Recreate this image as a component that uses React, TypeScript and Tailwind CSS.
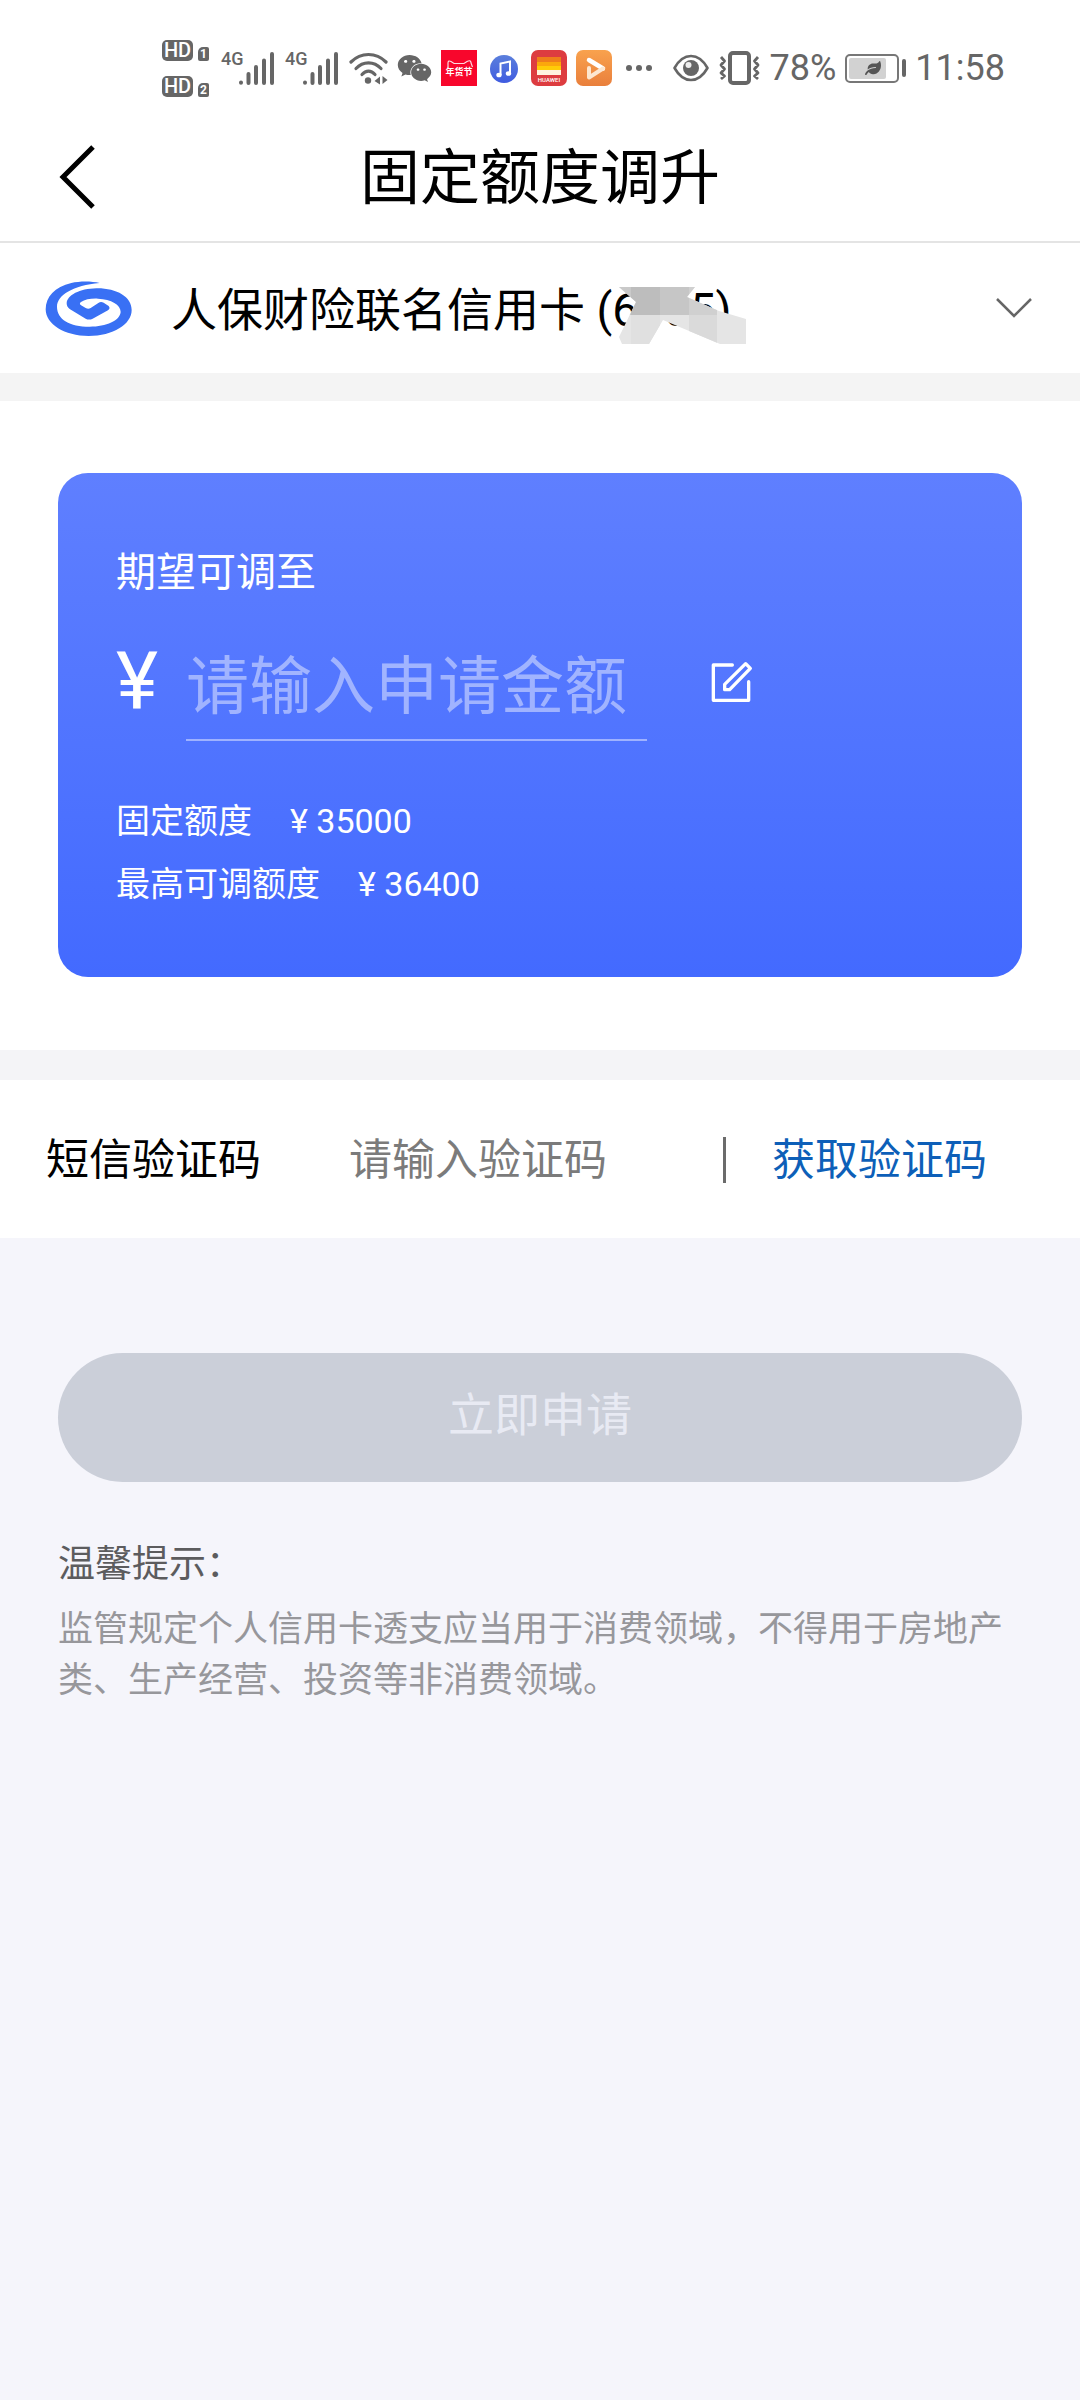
import React, { useState } from 'react';
import { FaLeaf, FaWeixin } from 'react-icons/fa';

const HdBadge = ({ sim }: { sim: number }) => (
  <div className="flex items-end gap-[5px]">
    <span className="flex h-[21px] w-[31px] items-center justify-center rounded-[5px] bg-[#666] text-[20px] leading-none font-medium text-white">
      HD
    </span>
    <span className="flex h-[14px] w-[11px] items-center justify-center rounded-[2px] rounded-tl-[5px] bg-[#666] text-[12px] leading-none font-bold text-white">
      {sim}
    </span>
  </div>
);

const Signal = () => (
  <div className="relative h-[34px] w-[53px]">
    <span className="absolute top-0 left-0 text-[18px] leading-[16px] font-medium text-[#666]">4G</span>
    <svg viewBox="0 0 53 34" className="h-full w-full" stroke="#666" strokeWidth="4" strokeLinecap="round">
      <path d="M20 31.5v.3M27.500 23v9M35 16v16M43 9.500v22.500M51 3v29" />
    </svg>
  </div>
);

const WifiIcon = () => (
  <svg viewBox="0 0 39 33" className="h-[33px] w-[39px]" fill="none" stroke="#666" strokeWidth="3.200" strokeLinecap="round">
    <path d="M2 10C12 0 27 0 37 10" />
    <path d="M7 16.500C14 9 25 9 32 16.500" />
    <path d="M13 22.500C17 18 22 18 26 22.500" />
    <circle cx="19" cy="28.500" r="3.200" fill="#666" stroke="none" />
    <path d="M31 24.500v8l-5.500-3.500zM33.500 24v8l5-4z" fill="#666" stroke="none" />
  </svg>
);

const TmallIcon = () => (
  <svg viewBox="0 0 36 36" className="h-9 w-9">
    <rect width="36" height="36" fill="#f8062c" />
    <path d="M7 17v-4q0-3 3-1.500l3 2h10l3-2q4-2 4 1.500l1.500 4" fill="none" stroke="#fff" strokeOpacity=".85" strokeWidth="1.200" />
    <text x="18" y="25" textAnchor="middle" fontSize="9" fontWeight="700" fill="#fff">年货节</text>
  </svg>
);

const MusicIcon = () => (
  <svg viewBox="0 0 36 36" className="h-9 w-9">
    <defs>
      <linearGradient id="music" x1="0" y1="0" x2="0" y2="1">
        <stop offset="0" stopColor="#5b7fdc" />
        <stop offset="1" stopColor="#3f5be0" />
      </linearGradient>
    </defs>
    <circle cx="18" cy="19" r="14" fill="url(#music)" />
    <path d="M14.500 25V13.500l9.500-2V23" fill="none" stroke="#fff" strokeWidth="2" />
    <ellipse cx="13" cy="25" rx="2.700" ry="2.300" fill="#fff" />
    <ellipse cx="22.500" cy="23.500" rx="2.700" ry="2.300" fill="#fff" />
  </svg>
);

const HuaweiIcon = () => (
  <svg viewBox="0 0 36 36" className="h-9 w-9">
    <rect width="36" height="36" rx="7" fill="#dd3c40" />
    <rect x="6" y="7" width="24" height="6" fill="#ef7d1b" />
    <rect x="6" y="12" width="24" height="4" fill="#fba70c" />
    <rect x="6" y="16" width="24" height="4" fill="#ffcb08" />
    <rect x="6" y="20" width="24" height="5" fill="#fff4e0" />
    <text x="18" y="32" textAnchor="middle" fontSize="6" fontWeight="500" fill="#fff">HUAWEI</text>
  </svg>
);

const VideoIcon = () => (
  <svg viewBox="0 0 36 36" className="h-9 w-9">
    <defs>
      <linearGradient id="video" x1="0" y1="0" x2="0" y2="1">
        <stop offset="0" stopColor="#f9a24e" />
        <stop offset="1" stopColor="#e97f3c" />
      </linearGradient>
    </defs>
    <rect width="36" height="36" rx="7" fill="url(#video)" />
    <path d="M13 10l14 8.500" stroke="#fff" strokeWidth="4.500" strokeLinecap="round" />
    <path d="M27 18.500L13 27.500V18" fill="none" stroke="#fde6cf" strokeWidth="4" strokeLinecap="round" strokeLinejoin="round" />
  </svg>
);

const EyeIcon = () => (
  <svg viewBox="0 0 36 28" className="h-7 w-9" fill="none" stroke="#666" strokeWidth="2.600">
    <path d="M1.500 14C6 6 12 2 18 2s12 4 16.500 12C30 22 24 26 18 26S6 22 1.500 14z" strokeLinejoin="round" />
    <circle cx="18" cy="14" r="8" fill="#666" stroke="none" />
    <circle cx="15.500" cy="11" r="3" fill="#eee" stroke="none" />
  </svg>
);

const VibrateIcon = () => (
  <svg viewBox="0 0 43 34" className="h-[34px] w-[43px]" fill="none" stroke="#666">
    <rect x="12" y="2" width="19" height="30" rx="3" strokeWidth="4" />
    <path d="M3 6l3.500 4L3 14l3.500 4L3 22l3.500 3L3 28M40 6l-3.500 4 3.500 4-3.500 4 3.500 4-3.500 3 3.500 3" strokeWidth="2.800" strokeLinejoin="round" />
  </svg>
);

const Battery = () => (
  <div className="flex items-center gap-[3px]">
    <div className="flex h-[29px] w-[54px] items-center rounded-[5px] border-2 border-[#777] p-[2px]">
      <div className="flex h-full w-[37px] items-center justify-end rounded-[2px] bg-[#d2d2d2] pr-[5px]">
        <FaLeaf className="h-4 w-4 text-[#555]" />
      </div>
    </div>
    <div className="h-[18px] w-[4px] rounded-[2px] bg-[#666]" />
  </div>
);

const StatusBar = () => (
  <div className="flex h-28 items-center pt-6 pr-[75px] pl-[162px]">
    <div className="flex items-center gap-[9px]">
      <div className="mr-[3px] flex flex-col gap-[15px]">
        <HdBadge sim={1} />
        <HdBadge sim={2} />
      </div>
      <Signal />
      <div className="mx-[2px]">
        <Signal />
      </div>
      <WifiIcon />
      <FaWeixin className="h-[35px] w-[35px] text-[#666]" />
      <TmallIcon />
      <MusicIcon />
      <HuaweiIcon />
      <VideoIcon />
      <svg viewBox="0 0 38 8" className="h-2 w-[38px]" fill="#666">
        <circle cx="8" cy="4" r="3" />
        <circle cx="18" cy="4" r="3" />
        <circle cx="28" cy="4" r="3" />
      </svg>
    </div>
    <div className="ml-auto flex items-center gap-[9px] text-[36px] leading-none text-[#666]">
      <EyeIcon />
      <VibrateIcon />
      <span>78%</span>
      <Battery />
      <span>11:58</span>
    </div>
  </div>
);

const BankLogo = () => (
  <svg viewBox="136 482 264 168" className="h-14 w-[88px] shrink-0" fill="#3970f4">
    <path d="M300 491C275 485 240 485 215 491C165 503 138 532 138 570C138 615 195 650 267 650C340 650 396 615 396 572C396 532 350 506 290 507C240 508 202 528 201 552C201 560 204 565 210 569L258 598Q268 603 279 598L325 573Q333 567 327 560L312 550Q303 546 296 551L273 566Q266 570 258 566L243 557Q238 552 244 548C256 540 275 537 295 538C335 540 363 556 363 578C361 604 320 622 270 622C210 622 172 600 172 562C172 528 220 498 300 491Z" />
  </svg>
);

// Mosaic strokes that hide the middle digits of the card number
const NumberMask = () => (
  <svg viewBox="0 0 128 58" className="pointer-events-none absolute top-1/2 left-[448px] h-[58px] w-32 -translate-y-[21px]">
    <defs>
      <clipPath id="mask-shape">
        <path d="M0 0H76L68 10L100 24L127 32V57H101L44 33L30 57H3L0 50L17 15Z" />
      </clipPath>
    </defs>
    <g clipPath="url(#mask-shape)">
      <rect width="128" height="58" fill="#e5e5e5" />
      <rect x="12" width="29" height="28" fill="#bdbdbd" />
      <rect width="12" height="28" fill="#c9c9c9" />
      <rect x="41" width="29" height="28" fill="#c6c6c6" />
      <rect x="70" width="28" height="28" fill="#d0d0d0" />
      <rect x="12" y="28" width="29" height="30" fill="#e0e0e0" />
      <rect x="70" y="28" width="28" height="30" fill="#dadada" />
    </g>
  </svg>
);

const CardPicker = () => (
  <div className="flex h-[130px] items-center bg-white pr-12 pl-[45px]">
    <BankLogo />
    <div className="relative ml-[38px] flex-1">
      <select
        aria-label="信用卡"
        className="h-20 w-full appearance-none bg-transparent pt-1 text-[46px] leading-[76px] text-black outline-none"
      >
        <option>人保财险联名信用卡 (6005)</option>
      </select>
      <NumberMask />
    </div>
    <svg viewBox="0 0 36 20" className="h-5 w-9 shrink-0" fill="none" stroke="#666" strokeWidth="2.500">
      <path d="M1 1l17 17L35 1" />
    </svg>
  </div>
);

const EditIcon = () => (
  <svg viewBox="936 180 126 126" className="h-[42px] w-[42px]" fill="none" stroke="#fff" strokeWidth="10" strokeLinejoin="round" strokeLinecap="round">
    <path d="M1000 192H943V298H1049V242" />
    <path d="M1040 188L1054 202L992 266H977V250Z" />
  </svg>
);

const limits = [
  { label: '固定额度', value: '35000' },
  { label: '最高可调额度', value: '36400' },
];

const LimitCard = () => {
  const [amount, setAmount] = useState('');

  return (
    <div className="rounded-[30px] bg-gradient-to-b from-[#5f7fff] to-[#436aff] px-[58px] pt-[72px] pb-[61px] text-white">
      <label htmlFor="amount" className="block text-[40px] leading-[56px]">
        期望可调至
      </label>
      <div className="mt-[31px] flex h-[109px] items-center">
        <span className="w-[70px] pb-[10px] text-[80px] leading-[98px]">¥</span>
        <input
          id="amount"
          type="text"
          inputMode="numeric"
          placeholder="请输入申请金额"
          value={amount}
          onChange={(e) => setAmount(e.target.value)}
          className="h-full w-[461px] border-b-2 border-white/45 bg-transparent pt-[2px] text-[63px] outline-none placeholder:text-white/45"
        />
        <button type="button" aria-label="编辑" className="ml-16 pb-[10px]">
          <EditIcon />
        </button>
      </div>
      <div className="pt-[49px]">
        {limits.map((item) => (
          <p key={item.label} className="flex gap-[38px] text-[34px] leading-[63px]">
            <span>{item.label}</span>
            <span>¥ {item.value}</span>
          </p>
        ))}
      </div>
    </div>
  );
};

const SmsRow = () => {
  const [code, setCode] = useState('');

  return (
    <div className="flex h-[158px] items-center bg-white px-[46px] pt-[2px] text-[43px]">
      <label htmlFor="code" className="text-black">
        短信验证码
      </label>
      <input
        id="code"
        type="text"
        placeholder="请输入验证码"
        value={code}
        onChange={(e) => setCode(e.target.value)}
        className="ml-[88px] h-20 w-[374px] bg-transparent outline-none placeholder:text-[#7b7b7b]"
      />
      <div className="h-[46px] w-[3px] bg-[#6b6b6b]" />
      <button type="button" className="ml-[46px] text-[#0d5fb8]">
        获取验证码
      </button>
    </div>
  );
};

const App = () => {
  return (
    <div className="min-h-screen bg-[#f5f5fb] font-['Roboto','Noto_Sans_CJK_SC',sans-serif]">
      <header className="bg-white">
        <StatusBar />
        <div className="grid h-[131px] grid-cols-[1fr_auto_1fr] items-center border-b-2 border-[#e4e4e4] px-[59px]">
          <button type="button" aria-label="返回">
            <svg viewBox="0 0 36 64" className="h-16 w-9" fill="none" stroke="#000" strokeWidth="5">
              <path d="M34 2L4 32L34 62" />
            </svg>
          </button>
          <h1 className="pt-1 text-[60px] leading-[88px] text-black">固定额度调升</h1>
        </div>
      </header>

      <main>
        <CardPicker />

        <section className="border-t-[28px] border-[#f4f4f4] bg-white px-[58px] pt-[72px] pb-[73px]">
          <LimitCard />
        </section>

        <section className="border-t-[30px] border-[#f4f4f7]">
          <SmsRow />
        </section>

        <section className="px-[58px] pt-[115px]">
          <button
            type="button"
            disabled
            className="h-[129px] w-full rounded-full bg-[#cbcfd9] pb-1 text-[46px] text-[#e8eaf3]"
          >
            立即申请
          </button>
          <h2 className="mt-[55px] text-[37px] leading-[56px] text-[#5c5c5e]">温馨提示：</h2>
          <p className="mt-[11px] text-[35px] leading-[51px] text-[#97979b]">
            监管规定个人信用卡透支应当用于消费领域，不得用于房地产类、生产经营、投资等非消费领域。
          </p>
        </section>
      </main>
    </div>
  );
};

export default App;
